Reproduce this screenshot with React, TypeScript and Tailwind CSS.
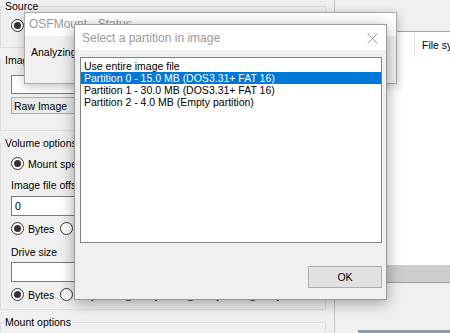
import type { ReactNode } from "react";

function Radio({ checked }: { checked?: boolean }) {
  return (
    <span className="flex h-[13px] w-[13px] shrink-0 items-center justify-center rounded-full border border-[#333] bg-white">
      {checked && <span className="h-[7px] w-[7px] rounded-full bg-[#333]" />}
    </span>
  );
}

function Group({ title, className, children }: { title: string; className?: string; children?: ReactNode }) {
  return (
    <fieldset className={"w-[326px] min-w-0 border border-[#dcdcdc] " + (className ?? "")}>
      <legend className="ml-[3px] px-[1px] leading-[12px]">{title}</legend>
      <div className="pl-[10px]">{children}</div>
    </fieldset>
  );
}

function UnitRow() {
  // Bytes / KBytes / MBytes ... mostly hidden under the dialog
  const units = ["Bytes", "KBytes", "MBytes", "GBytes", "TBytes"];
  return (
    <div className="flex h-[13px] items-center">
      {units.map((u, i) => (
        <div key={u} className={"flex items-center gap-[4px] " + (i === 0 ? "w-[49px]" : "w-[62px]")}>
          <Radio checked={i === 0} />
          <span className="leading-[12px]">{u}</span>
        </div>
      ))}
    </div>
  );
}

function MainWindow() {
  return (
    <div className="flex h-full w-full">
      {/* left options panel */}
      <div className="h-full w-[335px] shrink-0 border-r border-[#c4c4c4]">
        <Group title="Source" className="h-[48px]">
          <div className="mt-[7px] flex items-center">
            <Radio checked />
          </div>
        </Group>

        <Group title="Image file" className="mt-[6px] h-[77px]">
          <div className="mt-[9px] h-[19px] w-[306px] border border-[#7a7a7a] bg-white" />
          <div className="mt-[3px] flex h-[17px] w-[150px] items-center border border-[#acacac] bg-[#e9e9e9] pl-[2px] leading-[12px]">
            Raw Image
          </div>
        </Group>

        <Group title="Volume options" className="mt-[6px] pb-[8px]">
          <div className="mt-[8px] flex items-center gap-[4px]">
            <Radio checked />
            <span className="leading-[12px]">Mount specific partition</span>
          </div>
          <div className="mt-[9px] leading-[12px]">Image file offset</div>
          <div className="mt-[5px] flex h-[20px] w-[306px] items-center border border-[#7a7a7a] bg-white pl-[3px] leading-[12px]">
            0
          </div>
          <div className="mt-[6px]">
            <UnitRow />
          </div>
          <div className="mt-[11px] leading-[12px]">Drive size</div>
          <div className="mt-[4px] h-[20px] w-[306px] border border-[#7a7a7a] bg-white" />
          <div className="mt-[6px]">
            <UnitRow />
          </div>
        </Group>

        <Group title="Mount options" className="mt-[6px] h-[40px]" />
      </div>

      {/* right drive list */}
      <div className="flex h-full min-w-0 flex-1 flex-col">
        <div className="h-[32px] shrink-0 border-b border-[#a0a0a0]" />
        <div className="flex-1 overflow-hidden bg-white">
          <div className="flex h-[25px] items-center">
            <div className="ml-[79px] h-full w-px shrink-0 bg-[#e5e5e5]" />
            <span className="ml-[7px] whitespace-nowrap leading-[12px]">File sy</span>
          </div>
        </div>
        <div className="h-[17px] shrink-0 bg-[#cdcdcd]" />
        <div className="h-[48px] shrink-0 border-t border-[#a0a0a0]" />
        <div className="ml-[23px] h-[3px] shrink-0 bg-[#8f9dab]" />
      </div>
    </div>
  );
}

function StatusWindow() {
  return (
    <div className="absolute left-[24px] top-[12px] flex h-[72px] w-[373px] flex-col border border-[#aaaaaa] bg-[#f0f0f0] shadow-[0_2px_10px_rgba(0,0,0,0.25)]">
      <div className="h-[23px] shrink-0 bg-white pl-[4px] pt-[4px] text-[12px] leading-[14px] text-[#999]">
        OSFMount - Status
      </div>
      <div className="pl-[6px] pt-[10px] leading-[12px]">Analyzing</div>
    </div>
  );
}

function PartitionDialog() {
  const items = [
    "Use entire image file",
    "Partition 0 - 15.0 MB (DOS3.31+ FAT 16)",
    "Partition 1 - 30.0 MB (DOS3.31+ FAT 16)",
    "Partition 2 - 4.0 MB (Empty partition)",
  ];
  const selected = 1;
  return (
    <div className="absolute left-[74px] top-[24px] flex h-[276px] w-[313px] flex-col border border-[#9a9a9a] bg-[#f0f0f0] shadow-[0_3px_14px_rgba(0,0,0,0.35)]">
      <div className="flex h-[25px] shrink-0 items-center justify-between bg-white pl-[7px] pr-[8px]">
        <span className="text-[12px] leading-[14px] text-[#9a9a9a]">Select a partition in image</span>
        <svg width="11" height="11" viewBox="0 0 11 11" className="mt-[1px]">
          <path d="M0.5 0.5 L10.5 10.5 M10.5 0.5 L0.5 10.5" stroke="#9a9a9a" strokeWidth="1" fill="none" />
        </svg>
      </div>
      <div className="flex flex-1 flex-col items-end pl-[5px] pr-[4px]">
        <div className="mt-[7px] h-[186px] w-full border border-[#828282] bg-white pt-[2px]">
          {items.map((t, i) => (
            <div
              key={t}
              className={
                "h-[12px] whitespace-nowrap pl-[3px] leading-[12px] " +
                (i === selected ? "bg-[#0078d7] text-white" : "text-black")
              }
            >
              {t}
            </div>
          ))}
        </div>
        <button className="mt-[23px] flex h-[22px] w-[74px] items-center justify-center border border-[#adadad] bg-[#e1e1e1] leading-[12px] text-black">
          OK
        </button>
      </div>
    </div>
  );
}

export default function App() {
  return (
    <div className="relative h-[333px] w-[450px] overflow-hidden bg-[#f0f0f0] font-['Liberation_Sans',Arial,sans-serif] text-[10.5px] text-black">
      <MainWindow />
      <StatusWindow />
      <PartitionDialog />
    </div>
  );
}
